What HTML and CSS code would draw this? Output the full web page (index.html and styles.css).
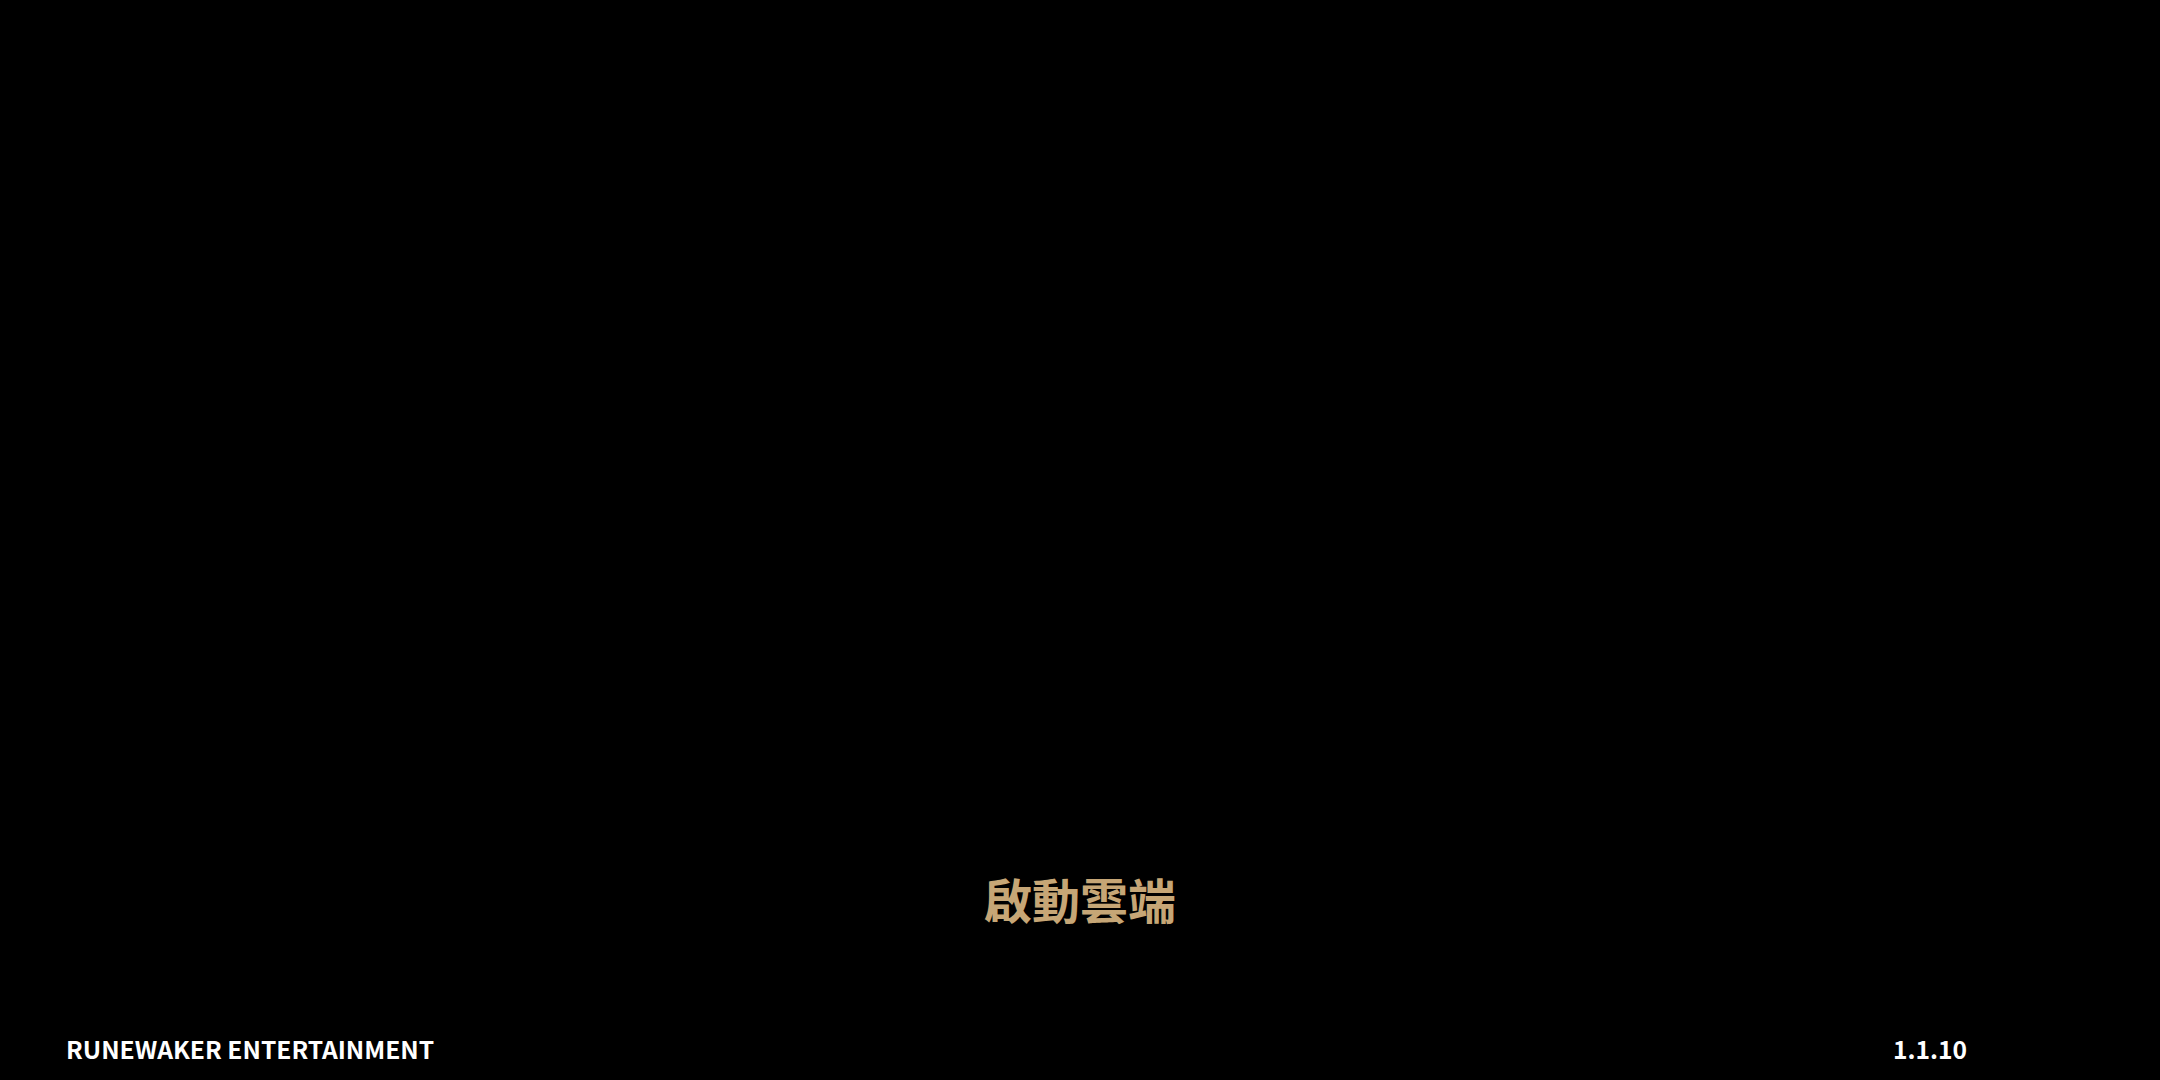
FILE: index.html
```html
<!DOCTYPE html>
<html lang="zh-Hant">
<head>
<meta charset="utf-8">
<title>Runewaker</title>
<link rel="stylesheet" href="styles.css">
</head>
<body>
<div class="screen">
  <div class="center">
    <div class="status">啟動雲端</div>
  </div>
  <div class="footer">
    <div class="brand">RUNEWAKER ENTERTAINMENT</div>
    <div class="version">1.1.10</div>
  </div>
</div>
</body>
</html>
```
FILE: styles.css
```css
html, body {
  margin: 0;
  padding: 0;
  background: #000;
  width: 100%;
  height: 100%;
  overflow: hidden;
}
.screen {
  width: 2160px;
  height: 1080px;
  display: flex;
  flex-direction: column;
  font-family: "Noto Sans CJK TC", sans-serif;
}
.center {
  flex: 1;
  display: flex;
  align-items: flex-end;
  justify-content: center;
  padding-bottom: 92px;
}
.status {
  font-family: "Noto Sans CJK TC", sans-serif;
  font-weight: 700;
  font-size: 48px;
  line-height: 60px;
  color: #c6a676;
}
.footer {
  box-sizing: border-box;
  height: 60px;
  display: flex;
  justify-content: space-between;
  align-items: flex-start;
  padding: 13px 193px 0 66px;
}
.brand, .version {
  color: #fff;
  font-weight: 700;
  font-size: 24.6px;
  line-height: 30px;
}
```
